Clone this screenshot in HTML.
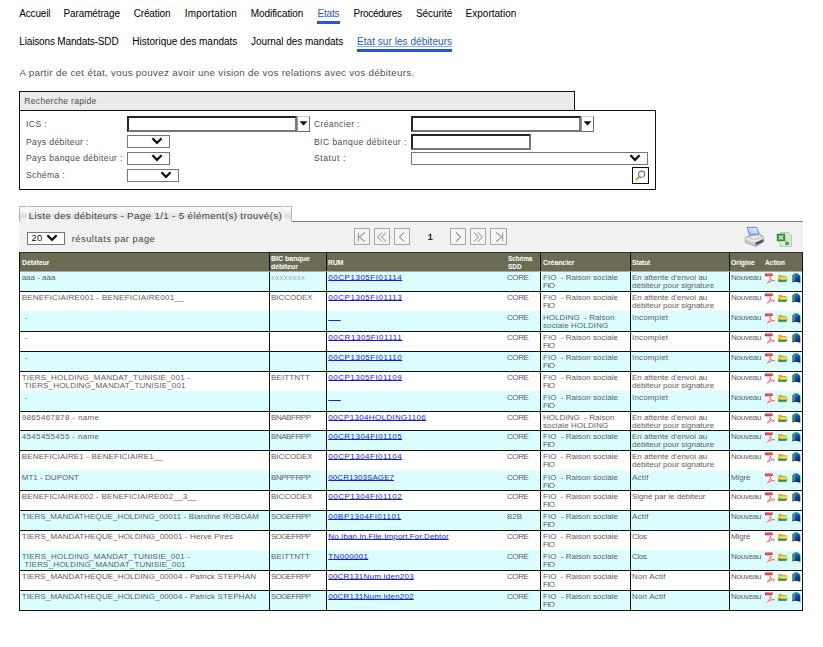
<!DOCTYPE html>
<html><head><meta charset="utf-8"><title>Etat sur les débiteurs</title>
<style>
html,body{margin:0;padding:0;background:#fff;}
body{width:823px;height:647px;position:relative;overflow:hidden;font-family:"Liberation Sans",sans-serif;}
.t{position:absolute;white-space:pre;line-height:12px;}
.nav{font-size:10.0px;font-weight:normal;color:#000;}
.navb{font-size:10.0px;font-weight:normal;color:#2458c8;}
.para{font-size:9.8px;font-weight:normal;color:#505050;}
.lbl{font-size:8.6px;font-weight:normal;color:#4c4c4c;}
.tab{font-size:9.9px;font-weight:normal;color:#444;}
.res{font-size:9.4px;font-weight:normal;color:#444;}
.pg{font-size:9.7px;font-weight:bold;color:#2a2a2a;}
.th{font-size:7.6px;font-weight:bold;color:#fff;}
.td{font-size:8.0px;font-weight:normal;color:#606060;}
.tdl{font-size:8.0px;font-weight:normal;color:#aaa;}
.lnk{font-size:8.0px;font-weight:normal;color:#1a1ae0;}
.n20{font-size:9.4px;font-weight:normal;color:#111;}
.b{position:absolute;box-sizing:border-box;}
.lnk{text-decoration:underline;text-underline-offset:0px;text-decoration-thickness:1px;}
.hl{position:absolute;height:1px;background:#111;left:20px;width:782px;}
.vl{position:absolute;width:1px;background:#111;top:252px;height:359px;}
.sel{position:absolute;box-sizing:border-box;border:1px solid #767676;background:#fff;}
.inp{position:absolute;box-sizing:border-box;background:#fff;border:2px solid;border-color:#262626 #767676 #767676 #262626;}
.dd{position:absolute;box-sizing:border-box;background:#fff;border:1px solid #6a6a6a;border-top-color:#c4d4d0;border-left-color:#999;}
.pb{position:absolute;box-sizing:border-box;width:16px;height:17px;top:228px;border:1px solid #a6a6a6;background:#f5f5f5;}
svg{position:absolute;overflow:visible;}
</style></head><body>
<div class="b" style="left:317px;top:21px;width:23px;height:3px;background:#2458c8;"></div>
<div class="b" style="left:357px;top:49px;width:95px;height:3px;background:#2458c8;"></div>
<div class="b" style="left:19px;top:110px;width:637px;height:80px;border:1px solid #111;background:#fff;"></div>
<div class="b" style="left:19px;top:91px;width:556px;height:20px;border:1px solid #111;background:#ebebeb;"></div>
<div class="inp" style="left:127px;top:116px;width:170px;height:16px;"></div>
<div class="dd" style="left:297px;top:116px;width:13px;height:16px;"></div>
<svg style="left:299px;top:121px" width="9" height="5" viewBox="0 0 9 5"><path d="M0.5 0.3H8.5L4.5 4.6Z" fill="#111"/></svg>
<div class="inp" style="left:411px;top:116px;width:170px;height:16px;"></div>
<div class="dd" style="left:581px;top:116px;width:13px;height:16px;"></div>
<svg style="left:583px;top:121px" width="9" height="5" viewBox="0 0 9 5"><path d="M0.5 0.3H8.5L4.5 4.6Z" fill="#111"/></svg>
<div class="inp" style="left:411px;top:134px;width:120px;height:16px;"></div>
<div class="sel" style="left:127px;top:135px;width:43px;height:13px;"></div>
<svg style="left:152px;top:138.3px" width="10" height="7" viewBox="0 0 10 7"><path d="M1.2 1.1L5 4.8L8.8 1.1" fill="none" stroke="#111" stroke-width="2.3" stroke-linecap="square"/></svg>
<div class="sel" style="left:127px;top:152px;width:43px;height:13px;"></div>
<svg style="left:152px;top:155.3px" width="10" height="7" viewBox="0 0 10 7"><path d="M1.2 1.1L5 4.8L8.8 1.1" fill="none" stroke="#111" stroke-width="2.3" stroke-linecap="square"/></svg>
<div class="sel" style="left:127px;top:169px;width:52px;height:13px;"></div>
<svg style="left:161px;top:172.3px" width="10" height="7" viewBox="0 0 10 7"><path d="M1.2 1.1L5 4.8L8.8 1.1" fill="none" stroke="#111" stroke-width="2.3" stroke-linecap="square"/></svg>
<div class="sel" style="left:411px;top:152px;width:237px;height:13px;"></div>
<svg style="left:629.9px;top:155.3px" width="10" height="7" viewBox="0 0 10 7"><path d="M1.2 1.1L5 4.8L8.8 1.1" fill="none" stroke="#111" stroke-width="2.3" stroke-linecap="square"/></svg>
<div class="b" style="left:632px;top:167px;width:17px;height:17px;border:1px solid #111;background:#fff;"></div>
<svg style="left:635px;top:170px" width="11" height="11" viewBox="0 0 11 11"><circle cx="6.6" cy="4.2" r="3.1" fill="#f4f6f8" stroke="#6e6e6e" stroke-width="1.1"/><path d="M4.3 6.6L1.3 9.7" stroke="#c8864a" stroke-width="1.6" stroke-linecap="round"/></svg>
<div class="b" style="left:19px;top:221px;width:784px;height:31px;background:#f0f1f0;border-top:1px solid #808080;"></div>
<div class="b" style="left:19px;top:206px;width:273px;height:16px;background:linear-gradient(#f9f9f7 0%,#f1f1f0 40%,#e1e2e2 60%,#eceded 80%,#f1f2f1 100%);border:1px solid #a9bcc2;border-bottom:none;"></div>
<div class="b" style="left:20px;top:207px;width:7px;height:15px;background:linear-gradient(#fdfdfd 0%,#efefef 40%,#d9dada 60%,#ebebeb 80%,#f4f4f4 100%);"></div>
<div class="b" style="left:27px;top:206px;width:1px;height:16px;background:#fff;"></div>
<div class="b" style="left:284px;top:207px;width:7px;height:15px;background:linear-gradient(#fdfdfd 0%,#efefef 40%,#d9dada 60%,#ebebeb 80%,#f4f4f4 100%);"></div>
<div class="b" style="left:283px;top:206px;width:1px;height:16px;background:#fff;"></div>
<div class="sel" style="left:27px;top:232px;width:38px;height:13px;"></div>
<svg style="left:47.3px;top:235.3px" width="10" height="7" viewBox="0 0 10 7"><path d="M1.2 1.1L5 4.8L8.8 1.1" fill="none" stroke="#111" stroke-width="2.3" stroke-linecap="square"/></svg>
<div class="pb" style="left:354px;"></div>
<svg style="left:354px;top:228.5px" width="16" height="16" viewBox="0 0 16 16"><path d="M4.3 3.5V12.5 M10.8 3.5L5.2 8L10.8 12.5" stroke="#9c9c9c" stroke-width="1.05" fill="none"/></svg>
<div class="pb" style="left:374px;"></div>
<svg style="left:374px;top:228.5px" width="16" height="16" viewBox="0 0 16 16"><path d="M8 3.5L3.6 8L8 12.5 M12 3.5L7.6 8L12 12.5" stroke="#9c9c9c" stroke-width="1.05" fill="none"/></svg>
<div class="pb" style="left:394px;"></div>
<svg style="left:394px;top:228.5px" width="16" height="16" viewBox="0 0 16 16"><path d="M10 3.5L5.4 8L10 12.5" stroke="#9c9c9c" stroke-width="1.05" fill="none"/></svg>
<div class="pb" style="left:450px;"></div>
<svg style="left:450px;top:228.5px" width="16" height="16" viewBox="0 0 16 16"><path d="M6 3.5L10.6 8L6 12.5" stroke="#9c9c9c" stroke-width="1.05" fill="none"/></svg>
<div class="pb" style="left:470px;"></div>
<svg style="left:470px;top:228.5px" width="16" height="16" viewBox="0 0 16 16"><path d="M4 3.5L8.4 8L4 12.5 M8 3.5L12.4 8L8 12.5" stroke="#9c9c9c" stroke-width="1.05" fill="none"/></svg>
<div class="pb" style="left:490px;width:17px;"></div>
<svg style="left:490.5px;top:228.5px" width="16" height="16" viewBox="0 0 16 16"><path d="M11.7 3.5V12.5 M5.2 3.5L10.8 8L5.2 12.5" stroke="#9c9c9c" stroke-width="1.05" fill="none"/></svg>
<svg style="left:744px;top:227px" width="21" height="20" viewBox="0 0 21 20">
<defs><linearGradient id="pp" x1="0.8" y1="0" x2="0.2" y2="1"><stop offset="0" stop-color="#eef5ff"/><stop offset="1" stop-color="#7db6f4"/></linearGradient></defs>
<path d="M3.2 0.4L12.6 0.4L15 6.8L5.8 8.6Z" fill="url(#pp)" stroke="#5a68be" stroke-width="0.8"/>
<path d="M1.2 10.8L6.4 8.2L15.8 7.2L19.6 10L19.8 14.6L12.2 19.2L1.6 15.6Z" fill="#cfd1d3" stroke="#8a8d91" stroke-width="0.8"/>
<path d="M1.4 11.2L11.6 14.6L19.4 10.6" fill="none" stroke="#f4f4f4" stroke-width="1.2"/>
<path d="M6.8 9.4L15 8.4L17 9.8L9 11.4Z" fill="#eeeff0"/>
<path d="M11.4 15.6L19.2 12.6V14.4L11.8 18.6Z" fill="#45484e"/>
<path d="M12.2 17.6L15 16.2" stroke="#5a70c8" stroke-width="0.9"/>
<circle cx="17.9" cy="12.4" r="0.7" fill="#4fbf3a"/>
</svg>
<svg style="left:776px;top:232px" width="16" height="15" viewBox="0 0 16 15">
<path d="M4 0.7H12.4L15.4 3.6V14.3H4Z" fill="#e2f2de" stroke="#98cb94" stroke-width="0.9"/>
<path d="M12.4 0.7V3.6H15.4" fill="#fff" stroke="#98cb94" stroke-width="0.7"/>
<path d="M10.4 3.4V13 M12.8 5V13" stroke="#c2e2bd" stroke-width="1"/>
<rect x="9.2" y="9.8" width="3.6" height="3.2" fill="#4a9f46"/>
<rect x="1.2" y="2.2" width="7.6" height="6.6" fill="#36a04a" stroke="#1d7a2f" stroke-width="0.8"/>
<path d="M3 3.6L7 7.4 M7 3.6L3 7.4" stroke="#f2fbf2" stroke-width="1.15"/>
</svg>
<div class="b" style="left:19px;top:252px;width:784px;height:19px;background:#6c6c55;"></div>
<div class="b" style="left:20px;top:271px;width:782px;height:20px;background:#dcfdfd;"></div>
<div class="b" style="left:20px;top:291px;width:782px;height:20px;background:#fff;"></div>
<div class="b" style="left:20px;top:311px;width:782px;height:20px;background:#dcfdfd;"></div>
<div class="b" style="left:20px;top:331px;width:782px;height:20px;background:#fff;"></div>
<div class="b" style="left:20px;top:351px;width:782px;height:20px;background:#dcfdfd;"></div>
<div class="b" style="left:20px;top:371px;width:782px;height:20px;background:#fff;"></div>
<div class="b" style="left:20px;top:391px;width:782px;height:20px;background:#dcfdfd;"></div>
<div class="b" style="left:20px;top:411px;width:782px;height:19px;background:#fff;"></div>
<div class="b" style="left:20px;top:430px;width:782px;height:20px;background:#dcfdfd;"></div>
<div class="b" style="left:20px;top:450px;width:782px;height:21px;background:#fff;"></div>
<div class="b" style="left:20px;top:471px;width:782px;height:19px;background:#dcfdfd;"></div>
<div class="b" style="left:20px;top:490px;width:782px;height:20px;background:#fff;"></div>
<div class="b" style="left:20px;top:510px;width:782px;height:20px;background:#dcfdfd;"></div>
<div class="b" style="left:20px;top:530px;width:782px;height:20px;background:#fff;"></div>
<div class="b" style="left:20px;top:550px;width:782px;height:20px;background:#dcfdfd;"></div>
<div class="b" style="left:20px;top:570px;width:782px;height:20px;background:#fff;"></div>
<div class="b" style="left:20px;top:590px;width:782px;height:20px;background:#dcfdfd;"></div>
<div class="b" style="left:20px;top:470px;width:782px;height:1px;background:#f1fefe;"></div>
<div class="b" style="left:20px;top:550px;width:782px;height:1px;background:#eafefe;"></div>
<div class="hl" style="top:291px"></div>
<div class="hl" style="top:331px"></div>
<div class="hl" style="top:351px"></div>
<div class="hl" style="top:371px"></div>
<div class="hl" style="top:411px"></div>
<div class="hl" style="top:430px"></div>
<div class="hl" style="top:450px"></div>
<div class="hl" style="top:490px"></div>
<div class="hl" style="top:510px"></div>
<div class="hl" style="top:530px"></div>
<div class="hl" style="top:570px"></div>
<div class="hl" style="top:590px"></div>
<div class="hl" style="top:610px"></div>
<div class="vl" style="left:19px"></div>
<div class="vl" style="left:269px"></div>
<div class="vl" style="left:326px"></div>
<div class="vl" style="left:540px"></div>
<div class="vl" style="left:630px"></div>
<div class="vl" style="left:729px"></div>
<div class="vl" style="left:802px"></div>
<div class="b" style="left:19px;top:252px;width:784px;height:1px;background:#2e2e28;"></div>
<div class="b" style="left:20px;top:271px;width:782px;height:1px;background:#9fada0;"></div>
<svg style="left:765px;top:273.4px" width="11" height="11" viewBox="0 0 11 11"><path d="M2 0.6H8L10.2 2.8V10.4H2Z" fill="#f6fbfb" stroke="#dfe3ea" stroke-width="0.5"/><rect x="0" y="0.4" width="7.6" height="2.8" rx="0.6" fill="#dc1c2c"/><path d="M1.3 1.8H6.4" stroke="#f7c5c9" stroke-width="0.9" stroke-dasharray="1.3 0.6"/><path d="M2.4 10C4.4 8.2 5.4 5.8 5.2 4.2C5.2 5.8 6.8 7.8 9.4 7.8C6.6 7.6 4.2 8.4 2.4 10Z" fill="none" stroke="#e6505e" stroke-width="0.85"/></svg>
<svg style="left:778px;top:275.2px" width="10" height="7" viewBox="0 0 10 7"><defs><linearGradient id="fg271" x1="0" y1="0" x2="0" y2="1"><stop offset="0" stop-color="#e8660e"/><stop offset="0.38" stop-color="#f6dc2c"/><stop offset="0.7" stop-color="#5aa428"/><stop offset="1" stop-color="#176e26"/></linearGradient></defs><path d="M0.2 1Q0.2 0.2 1 0.2H3.6L4.6 1H8Q8.6 1 8.6 1.8V2.4H9.9L8.4 6.8H0.2Z" fill="url(#fg271)"/><path d="M2.8 2.9H9L8.2 4.6H2Z" fill="#dfeee6" opacity="0.78"/></svg>
<svg style="left:792px;top:273.3px" width="9" height="10" viewBox="0 0 9 10"><defs><linearGradient id="bg271" x1="0" y1="0" x2="0.4" y2="1"><stop offset="0" stop-color="#2a97e6"/><stop offset="0.45" stop-color="#1259b0"/><stop offset="1" stop-color="#0a2f74"/></linearGradient></defs><path d="M0.3 2L2.9 0.3V8.2L0.3 9Z" fill="#3a9150"/><path d="M2.9 0.3L5.6 0.2L8.3 3V9.2L2.9 8.2Z" fill="url(#bg271)"/><path d="M0.3 9L2.9 8.2L8.3 9.2" fill="none" stroke="#14245a" stroke-width="0.9"/><path d="M1.2 2.4V8.2" stroke="#6f6a48" stroke-width="0.8"/></svg>
<svg style="left:765px;top:293.4px" width="11" height="11" viewBox="0 0 11 11"><path d="M2 0.6H8L10.2 2.8V10.4H2Z" fill="#f6fbfb" stroke="#dfe3ea" stroke-width="0.5"/><rect x="0" y="0.4" width="7.6" height="2.8" rx="0.6" fill="#dc1c2c"/><path d="M1.3 1.8H6.4" stroke="#f7c5c9" stroke-width="0.9" stroke-dasharray="1.3 0.6"/><path d="M2.4 10C4.4 8.2 5.4 5.8 5.2 4.2C5.2 5.8 6.8 7.8 9.4 7.8C6.6 7.6 4.2 8.4 2.4 10Z" fill="none" stroke="#e6505e" stroke-width="0.85"/></svg>
<svg style="left:778px;top:295.2px" width="10" height="7" viewBox="0 0 10 7"><defs><linearGradient id="fg291" x1="0" y1="0" x2="0" y2="1"><stop offset="0" stop-color="#e8660e"/><stop offset="0.38" stop-color="#f6dc2c"/><stop offset="0.7" stop-color="#5aa428"/><stop offset="1" stop-color="#176e26"/></linearGradient></defs><path d="M0.2 1Q0.2 0.2 1 0.2H3.6L4.6 1H8Q8.6 1 8.6 1.8V2.4H9.9L8.4 6.8H0.2Z" fill="url(#fg291)"/><path d="M2.8 2.9H9L8.2 4.6H2Z" fill="#dfeee6" opacity="0.78"/></svg>
<svg style="left:792px;top:293.3px" width="9" height="10" viewBox="0 0 9 10"><defs><linearGradient id="bg291" x1="0" y1="0" x2="0.4" y2="1"><stop offset="0" stop-color="#2a97e6"/><stop offset="0.45" stop-color="#1259b0"/><stop offset="1" stop-color="#0a2f74"/></linearGradient></defs><path d="M0.3 2L2.9 0.3V8.2L0.3 9Z" fill="#3a9150"/><path d="M2.9 0.3L5.6 0.2L8.3 3V9.2L2.9 8.2Z" fill="url(#bg291)"/><path d="M0.3 9L2.9 8.2L8.3 9.2" fill="none" stroke="#14245a" stroke-width="0.9"/><path d="M1.2 2.4V8.2" stroke="#6f6a48" stroke-width="0.8"/></svg>
<svg style="left:765px;top:313.4px" width="11" height="11" viewBox="0 0 11 11"><path d="M2 0.6H8L10.2 2.8V10.4H2Z" fill="#f6fbfb" stroke="#dfe3ea" stroke-width="0.5"/><rect x="0" y="0.4" width="7.6" height="2.8" rx="0.6" fill="#dc1c2c"/><path d="M1.3 1.8H6.4" stroke="#f7c5c9" stroke-width="0.9" stroke-dasharray="1.3 0.6"/><path d="M2.4 10C4.4 8.2 5.4 5.8 5.2 4.2C5.2 5.8 6.8 7.8 9.4 7.8C6.6 7.6 4.2 8.4 2.4 10Z" fill="none" stroke="#e6505e" stroke-width="0.85"/></svg>
<svg style="left:778px;top:315.2px" width="10" height="7" viewBox="0 0 10 7"><defs><linearGradient id="fg311" x1="0" y1="0" x2="0" y2="1"><stop offset="0" stop-color="#e8660e"/><stop offset="0.38" stop-color="#f6dc2c"/><stop offset="0.7" stop-color="#5aa428"/><stop offset="1" stop-color="#176e26"/></linearGradient></defs><path d="M0.2 1Q0.2 0.2 1 0.2H3.6L4.6 1H8Q8.6 1 8.6 1.8V2.4H9.9L8.4 6.8H0.2Z" fill="url(#fg311)"/><path d="M2.8 2.9H9L8.2 4.6H2Z" fill="#dfeee6" opacity="0.78"/></svg>
<svg style="left:792px;top:313.3px" width="9" height="10" viewBox="0 0 9 10"><defs><linearGradient id="bg311" x1="0" y1="0" x2="0.4" y2="1"><stop offset="0" stop-color="#2a97e6"/><stop offset="0.45" stop-color="#1259b0"/><stop offset="1" stop-color="#0a2f74"/></linearGradient></defs><path d="M0.3 2L2.9 0.3V8.2L0.3 9Z" fill="#3a9150"/><path d="M2.9 0.3L5.6 0.2L8.3 3V9.2L2.9 8.2Z" fill="url(#bg311)"/><path d="M0.3 9L2.9 8.2L8.3 9.2" fill="none" stroke="#14245a" stroke-width="0.9"/><path d="M1.2 2.4V8.2" stroke="#6f6a48" stroke-width="0.8"/></svg>
<svg style="left:765px;top:333.4px" width="11" height="11" viewBox="0 0 11 11"><path d="M2 0.6H8L10.2 2.8V10.4H2Z" fill="#f6fbfb" stroke="#dfe3ea" stroke-width="0.5"/><rect x="0" y="0.4" width="7.6" height="2.8" rx="0.6" fill="#dc1c2c"/><path d="M1.3 1.8H6.4" stroke="#f7c5c9" stroke-width="0.9" stroke-dasharray="1.3 0.6"/><path d="M2.4 10C4.4 8.2 5.4 5.8 5.2 4.2C5.2 5.8 6.8 7.8 9.4 7.8C6.6 7.6 4.2 8.4 2.4 10Z" fill="none" stroke="#e6505e" stroke-width="0.85"/></svg>
<svg style="left:778px;top:335.2px" width="10" height="7" viewBox="0 0 10 7"><defs><linearGradient id="fg331" x1="0" y1="0" x2="0" y2="1"><stop offset="0" stop-color="#e8660e"/><stop offset="0.38" stop-color="#f6dc2c"/><stop offset="0.7" stop-color="#5aa428"/><stop offset="1" stop-color="#176e26"/></linearGradient></defs><path d="M0.2 1Q0.2 0.2 1 0.2H3.6L4.6 1H8Q8.6 1 8.6 1.8V2.4H9.9L8.4 6.8H0.2Z" fill="url(#fg331)"/><path d="M2.8 2.9H9L8.2 4.6H2Z" fill="#dfeee6" opacity="0.78"/></svg>
<svg style="left:792px;top:333.3px" width="9" height="10" viewBox="0 0 9 10"><defs><linearGradient id="bg331" x1="0" y1="0" x2="0.4" y2="1"><stop offset="0" stop-color="#2a97e6"/><stop offset="0.45" stop-color="#1259b0"/><stop offset="1" stop-color="#0a2f74"/></linearGradient></defs><path d="M0.3 2L2.9 0.3V8.2L0.3 9Z" fill="#3a9150"/><path d="M2.9 0.3L5.6 0.2L8.3 3V9.2L2.9 8.2Z" fill="url(#bg331)"/><path d="M0.3 9L2.9 8.2L8.3 9.2" fill="none" stroke="#14245a" stroke-width="0.9"/><path d="M1.2 2.4V8.2" stroke="#6f6a48" stroke-width="0.8"/></svg>
<svg style="left:765px;top:353.4px" width="11" height="11" viewBox="0 0 11 11"><path d="M2 0.6H8L10.2 2.8V10.4H2Z" fill="#f6fbfb" stroke="#dfe3ea" stroke-width="0.5"/><rect x="0" y="0.4" width="7.6" height="2.8" rx="0.6" fill="#dc1c2c"/><path d="M1.3 1.8H6.4" stroke="#f7c5c9" stroke-width="0.9" stroke-dasharray="1.3 0.6"/><path d="M2.4 10C4.4 8.2 5.4 5.8 5.2 4.2C5.2 5.8 6.8 7.8 9.4 7.8C6.6 7.6 4.2 8.4 2.4 10Z" fill="none" stroke="#e6505e" stroke-width="0.85"/></svg>
<svg style="left:778px;top:355.2px" width="10" height="7" viewBox="0 0 10 7"><defs><linearGradient id="fg351" x1="0" y1="0" x2="0" y2="1"><stop offset="0" stop-color="#e8660e"/><stop offset="0.38" stop-color="#f6dc2c"/><stop offset="0.7" stop-color="#5aa428"/><stop offset="1" stop-color="#176e26"/></linearGradient></defs><path d="M0.2 1Q0.2 0.2 1 0.2H3.6L4.6 1H8Q8.6 1 8.6 1.8V2.4H9.9L8.4 6.8H0.2Z" fill="url(#fg351)"/><path d="M2.8 2.9H9L8.2 4.6H2Z" fill="#dfeee6" opacity="0.78"/></svg>
<svg style="left:792px;top:353.3px" width="9" height="10" viewBox="0 0 9 10"><defs><linearGradient id="bg351" x1="0" y1="0" x2="0.4" y2="1"><stop offset="0" stop-color="#2a97e6"/><stop offset="0.45" stop-color="#1259b0"/><stop offset="1" stop-color="#0a2f74"/></linearGradient></defs><path d="M0.3 2L2.9 0.3V8.2L0.3 9Z" fill="#3a9150"/><path d="M2.9 0.3L5.6 0.2L8.3 3V9.2L2.9 8.2Z" fill="url(#bg351)"/><path d="M0.3 9L2.9 8.2L8.3 9.2" fill="none" stroke="#14245a" stroke-width="0.9"/><path d="M1.2 2.4V8.2" stroke="#6f6a48" stroke-width="0.8"/></svg>
<svg style="left:765px;top:373.4px" width="11" height="11" viewBox="0 0 11 11"><path d="M2 0.6H8L10.2 2.8V10.4H2Z" fill="#f6fbfb" stroke="#dfe3ea" stroke-width="0.5"/><rect x="0" y="0.4" width="7.6" height="2.8" rx="0.6" fill="#dc1c2c"/><path d="M1.3 1.8H6.4" stroke="#f7c5c9" stroke-width="0.9" stroke-dasharray="1.3 0.6"/><path d="M2.4 10C4.4 8.2 5.4 5.8 5.2 4.2C5.2 5.8 6.8 7.8 9.4 7.8C6.6 7.6 4.2 8.4 2.4 10Z" fill="none" stroke="#e6505e" stroke-width="0.85"/></svg>
<svg style="left:778px;top:375.2px" width="10" height="7" viewBox="0 0 10 7"><defs><linearGradient id="fg371" x1="0" y1="0" x2="0" y2="1"><stop offset="0" stop-color="#e8660e"/><stop offset="0.38" stop-color="#f6dc2c"/><stop offset="0.7" stop-color="#5aa428"/><stop offset="1" stop-color="#176e26"/></linearGradient></defs><path d="M0.2 1Q0.2 0.2 1 0.2H3.6L4.6 1H8Q8.6 1 8.6 1.8V2.4H9.9L8.4 6.8H0.2Z" fill="url(#fg371)"/><path d="M2.8 2.9H9L8.2 4.6H2Z" fill="#dfeee6" opacity="0.78"/></svg>
<svg style="left:792px;top:373.3px" width="9" height="10" viewBox="0 0 9 10"><defs><linearGradient id="bg371" x1="0" y1="0" x2="0.4" y2="1"><stop offset="0" stop-color="#2a97e6"/><stop offset="0.45" stop-color="#1259b0"/><stop offset="1" stop-color="#0a2f74"/></linearGradient></defs><path d="M0.3 2L2.9 0.3V8.2L0.3 9Z" fill="#3a9150"/><path d="M2.9 0.3L5.6 0.2L8.3 3V9.2L2.9 8.2Z" fill="url(#bg371)"/><path d="M0.3 9L2.9 8.2L8.3 9.2" fill="none" stroke="#14245a" stroke-width="0.9"/><path d="M1.2 2.4V8.2" stroke="#6f6a48" stroke-width="0.8"/></svg>
<svg style="left:765px;top:393.4px" width="11" height="11" viewBox="0 0 11 11"><path d="M2 0.6H8L10.2 2.8V10.4H2Z" fill="#f6fbfb" stroke="#dfe3ea" stroke-width="0.5"/><rect x="0" y="0.4" width="7.6" height="2.8" rx="0.6" fill="#dc1c2c"/><path d="M1.3 1.8H6.4" stroke="#f7c5c9" stroke-width="0.9" stroke-dasharray="1.3 0.6"/><path d="M2.4 10C4.4 8.2 5.4 5.8 5.2 4.2C5.2 5.8 6.8 7.8 9.4 7.8C6.6 7.6 4.2 8.4 2.4 10Z" fill="none" stroke="#e6505e" stroke-width="0.85"/></svg>
<svg style="left:778px;top:395.2px" width="10" height="7" viewBox="0 0 10 7"><defs><linearGradient id="fg391" x1="0" y1="0" x2="0" y2="1"><stop offset="0" stop-color="#e8660e"/><stop offset="0.38" stop-color="#f6dc2c"/><stop offset="0.7" stop-color="#5aa428"/><stop offset="1" stop-color="#176e26"/></linearGradient></defs><path d="M0.2 1Q0.2 0.2 1 0.2H3.6L4.6 1H8Q8.6 1 8.6 1.8V2.4H9.9L8.4 6.8H0.2Z" fill="url(#fg391)"/><path d="M2.8 2.9H9L8.2 4.6H2Z" fill="#dfeee6" opacity="0.78"/></svg>
<svg style="left:792px;top:393.3px" width="9" height="10" viewBox="0 0 9 10"><defs><linearGradient id="bg391" x1="0" y1="0" x2="0.4" y2="1"><stop offset="0" stop-color="#2a97e6"/><stop offset="0.45" stop-color="#1259b0"/><stop offset="1" stop-color="#0a2f74"/></linearGradient></defs><path d="M0.3 2L2.9 0.3V8.2L0.3 9Z" fill="#3a9150"/><path d="M2.9 0.3L5.6 0.2L8.3 3V9.2L2.9 8.2Z" fill="url(#bg391)"/><path d="M0.3 9L2.9 8.2L8.3 9.2" fill="none" stroke="#14245a" stroke-width="0.9"/><path d="M1.2 2.4V8.2" stroke="#6f6a48" stroke-width="0.8"/></svg>
<svg style="left:765px;top:413.4px" width="11" height="11" viewBox="0 0 11 11"><path d="M2 0.6H8L10.2 2.8V10.4H2Z" fill="#f6fbfb" stroke="#dfe3ea" stroke-width="0.5"/><rect x="0" y="0.4" width="7.6" height="2.8" rx="0.6" fill="#dc1c2c"/><path d="M1.3 1.8H6.4" stroke="#f7c5c9" stroke-width="0.9" stroke-dasharray="1.3 0.6"/><path d="M2.4 10C4.4 8.2 5.4 5.8 5.2 4.2C5.2 5.8 6.8 7.8 9.4 7.8C6.6 7.6 4.2 8.4 2.4 10Z" fill="none" stroke="#e6505e" stroke-width="0.85"/></svg>
<svg style="left:778px;top:415.2px" width="10" height="7" viewBox="0 0 10 7"><defs><linearGradient id="fg411" x1="0" y1="0" x2="0" y2="1"><stop offset="0" stop-color="#e8660e"/><stop offset="0.38" stop-color="#f6dc2c"/><stop offset="0.7" stop-color="#5aa428"/><stop offset="1" stop-color="#176e26"/></linearGradient></defs><path d="M0.2 1Q0.2 0.2 1 0.2H3.6L4.6 1H8Q8.6 1 8.6 1.8V2.4H9.9L8.4 6.8H0.2Z" fill="url(#fg411)"/><path d="M2.8 2.9H9L8.2 4.6H2Z" fill="#dfeee6" opacity="0.78"/></svg>
<svg style="left:792px;top:413.3px" width="9" height="10" viewBox="0 0 9 10"><defs><linearGradient id="bg411" x1="0" y1="0" x2="0.4" y2="1"><stop offset="0" stop-color="#2a97e6"/><stop offset="0.45" stop-color="#1259b0"/><stop offset="1" stop-color="#0a2f74"/></linearGradient></defs><path d="M0.3 2L2.9 0.3V8.2L0.3 9Z" fill="#3a9150"/><path d="M2.9 0.3L5.6 0.2L8.3 3V9.2L2.9 8.2Z" fill="url(#bg411)"/><path d="M0.3 9L2.9 8.2L8.3 9.2" fill="none" stroke="#14245a" stroke-width="0.9"/><path d="M1.2 2.4V8.2" stroke="#6f6a48" stroke-width="0.8"/></svg>
<svg style="left:765px;top:432.4px" width="11" height="11" viewBox="0 0 11 11"><path d="M2 0.6H8L10.2 2.8V10.4H2Z" fill="#f6fbfb" stroke="#dfe3ea" stroke-width="0.5"/><rect x="0" y="0.4" width="7.6" height="2.8" rx="0.6" fill="#dc1c2c"/><path d="M1.3 1.8H6.4" stroke="#f7c5c9" stroke-width="0.9" stroke-dasharray="1.3 0.6"/><path d="M2.4 10C4.4 8.2 5.4 5.8 5.2 4.2C5.2 5.8 6.8 7.8 9.4 7.8C6.6 7.6 4.2 8.4 2.4 10Z" fill="none" stroke="#e6505e" stroke-width="0.85"/></svg>
<svg style="left:778px;top:434.2px" width="10" height="7" viewBox="0 0 10 7"><defs><linearGradient id="fg430" x1="0" y1="0" x2="0" y2="1"><stop offset="0" stop-color="#e8660e"/><stop offset="0.38" stop-color="#f6dc2c"/><stop offset="0.7" stop-color="#5aa428"/><stop offset="1" stop-color="#176e26"/></linearGradient></defs><path d="M0.2 1Q0.2 0.2 1 0.2H3.6L4.6 1H8Q8.6 1 8.6 1.8V2.4H9.9L8.4 6.8H0.2Z" fill="url(#fg430)"/><path d="M2.8 2.9H9L8.2 4.6H2Z" fill="#dfeee6" opacity="0.78"/></svg>
<svg style="left:792px;top:432.3px" width="9" height="10" viewBox="0 0 9 10"><defs><linearGradient id="bg430" x1="0" y1="0" x2="0.4" y2="1"><stop offset="0" stop-color="#2a97e6"/><stop offset="0.45" stop-color="#1259b0"/><stop offset="1" stop-color="#0a2f74"/></linearGradient></defs><path d="M0.3 2L2.9 0.3V8.2L0.3 9Z" fill="#3a9150"/><path d="M2.9 0.3L5.6 0.2L8.3 3V9.2L2.9 8.2Z" fill="url(#bg430)"/><path d="M0.3 9L2.9 8.2L8.3 9.2" fill="none" stroke="#14245a" stroke-width="0.9"/><path d="M1.2 2.4V8.2" stroke="#6f6a48" stroke-width="0.8"/></svg>
<svg style="left:765px;top:452.4px" width="11" height="11" viewBox="0 0 11 11"><path d="M2 0.6H8L10.2 2.8V10.4H2Z" fill="#f6fbfb" stroke="#dfe3ea" stroke-width="0.5"/><rect x="0" y="0.4" width="7.6" height="2.8" rx="0.6" fill="#dc1c2c"/><path d="M1.3 1.8H6.4" stroke="#f7c5c9" stroke-width="0.9" stroke-dasharray="1.3 0.6"/><path d="M2.4 10C4.4 8.2 5.4 5.8 5.2 4.2C5.2 5.8 6.8 7.8 9.4 7.8C6.6 7.6 4.2 8.4 2.4 10Z" fill="none" stroke="#e6505e" stroke-width="0.85"/></svg>
<svg style="left:778px;top:454.2px" width="10" height="7" viewBox="0 0 10 7"><defs><linearGradient id="fg450" x1="0" y1="0" x2="0" y2="1"><stop offset="0" stop-color="#e8660e"/><stop offset="0.38" stop-color="#f6dc2c"/><stop offset="0.7" stop-color="#5aa428"/><stop offset="1" stop-color="#176e26"/></linearGradient></defs><path d="M0.2 1Q0.2 0.2 1 0.2H3.6L4.6 1H8Q8.6 1 8.6 1.8V2.4H9.9L8.4 6.8H0.2Z" fill="url(#fg450)"/><path d="M2.8 2.9H9L8.2 4.6H2Z" fill="#dfeee6" opacity="0.78"/></svg>
<svg style="left:792px;top:452.3px" width="9" height="10" viewBox="0 0 9 10"><defs><linearGradient id="bg450" x1="0" y1="0" x2="0.4" y2="1"><stop offset="0" stop-color="#2a97e6"/><stop offset="0.45" stop-color="#1259b0"/><stop offset="1" stop-color="#0a2f74"/></linearGradient></defs><path d="M0.3 2L2.9 0.3V8.2L0.3 9Z" fill="#3a9150"/><path d="M2.9 0.3L5.6 0.2L8.3 3V9.2L2.9 8.2Z" fill="url(#bg450)"/><path d="M0.3 9L2.9 8.2L8.3 9.2" fill="none" stroke="#14245a" stroke-width="0.9"/><path d="M1.2 2.4V8.2" stroke="#6f6a48" stroke-width="0.8"/></svg>
<svg style="left:765px;top:473.4px" width="11" height="11" viewBox="0 0 11 11"><path d="M2 0.6H8L10.2 2.8V10.4H2Z" fill="#f6fbfb" stroke="#dfe3ea" stroke-width="0.5"/><rect x="0" y="0.4" width="7.6" height="2.8" rx="0.6" fill="#dc1c2c"/><path d="M1.3 1.8H6.4" stroke="#f7c5c9" stroke-width="0.9" stroke-dasharray="1.3 0.6"/><path d="M2.4 10C4.4 8.2 5.4 5.8 5.2 4.2C5.2 5.8 6.8 7.8 9.4 7.8C6.6 7.6 4.2 8.4 2.4 10Z" fill="none" stroke="#e6505e" stroke-width="0.85"/></svg>
<svg style="left:778px;top:475.2px" width="10" height="7" viewBox="0 0 10 7"><defs><linearGradient id="fg471" x1="0" y1="0" x2="0" y2="1"><stop offset="0" stop-color="#e8660e"/><stop offset="0.38" stop-color="#f6dc2c"/><stop offset="0.7" stop-color="#5aa428"/><stop offset="1" stop-color="#176e26"/></linearGradient></defs><path d="M0.2 1Q0.2 0.2 1 0.2H3.6L4.6 1H8Q8.6 1 8.6 1.8V2.4H9.9L8.4 6.8H0.2Z" fill="url(#fg471)"/><path d="M2.8 2.9H9L8.2 4.6H2Z" fill="#dfeee6" opacity="0.78"/></svg>
<svg style="left:792px;top:473.3px" width="9" height="10" viewBox="0 0 9 10"><defs><linearGradient id="bg471" x1="0" y1="0" x2="0.4" y2="1"><stop offset="0" stop-color="#2a97e6"/><stop offset="0.45" stop-color="#1259b0"/><stop offset="1" stop-color="#0a2f74"/></linearGradient></defs><path d="M0.3 2L2.9 0.3V8.2L0.3 9Z" fill="#3a9150"/><path d="M2.9 0.3L5.6 0.2L8.3 3V9.2L2.9 8.2Z" fill="url(#bg471)"/><path d="M0.3 9L2.9 8.2L8.3 9.2" fill="none" stroke="#14245a" stroke-width="0.9"/><path d="M1.2 2.4V8.2" stroke="#6f6a48" stroke-width="0.8"/></svg>
<svg style="left:765px;top:492.4px" width="11" height="11" viewBox="0 0 11 11"><path d="M2 0.6H8L10.2 2.8V10.4H2Z" fill="#f6fbfb" stroke="#dfe3ea" stroke-width="0.5"/><rect x="0" y="0.4" width="7.6" height="2.8" rx="0.6" fill="#dc1c2c"/><path d="M1.3 1.8H6.4" stroke="#f7c5c9" stroke-width="0.9" stroke-dasharray="1.3 0.6"/><path d="M2.4 10C4.4 8.2 5.4 5.8 5.2 4.2C5.2 5.8 6.8 7.8 9.4 7.8C6.6 7.6 4.2 8.4 2.4 10Z" fill="none" stroke="#e6505e" stroke-width="0.85"/></svg>
<svg style="left:778px;top:494.2px" width="10" height="7" viewBox="0 0 10 7"><defs><linearGradient id="fg490" x1="0" y1="0" x2="0" y2="1"><stop offset="0" stop-color="#e8660e"/><stop offset="0.38" stop-color="#f6dc2c"/><stop offset="0.7" stop-color="#5aa428"/><stop offset="1" stop-color="#176e26"/></linearGradient></defs><path d="M0.2 1Q0.2 0.2 1 0.2H3.6L4.6 1H8Q8.6 1 8.6 1.8V2.4H9.9L8.4 6.8H0.2Z" fill="url(#fg490)"/><path d="M2.8 2.9H9L8.2 4.6H2Z" fill="#dfeee6" opacity="0.78"/></svg>
<svg style="left:792px;top:492.3px" width="9" height="10" viewBox="0 0 9 10"><defs><linearGradient id="bg490" x1="0" y1="0" x2="0.4" y2="1"><stop offset="0" stop-color="#2a97e6"/><stop offset="0.45" stop-color="#1259b0"/><stop offset="1" stop-color="#0a2f74"/></linearGradient></defs><path d="M0.3 2L2.9 0.3V8.2L0.3 9Z" fill="#3a9150"/><path d="M2.9 0.3L5.6 0.2L8.3 3V9.2L2.9 8.2Z" fill="url(#bg490)"/><path d="M0.3 9L2.9 8.2L8.3 9.2" fill="none" stroke="#14245a" stroke-width="0.9"/><path d="M1.2 2.4V8.2" stroke="#6f6a48" stroke-width="0.8"/></svg>
<svg style="left:765px;top:512.4px" width="11" height="11" viewBox="0 0 11 11"><path d="M2 0.6H8L10.2 2.8V10.4H2Z" fill="#f6fbfb" stroke="#dfe3ea" stroke-width="0.5"/><rect x="0" y="0.4" width="7.6" height="2.8" rx="0.6" fill="#dc1c2c"/><path d="M1.3 1.8H6.4" stroke="#f7c5c9" stroke-width="0.9" stroke-dasharray="1.3 0.6"/><path d="M2.4 10C4.4 8.2 5.4 5.8 5.2 4.2C5.2 5.8 6.8 7.8 9.4 7.8C6.6 7.6 4.2 8.4 2.4 10Z" fill="none" stroke="#e6505e" stroke-width="0.85"/></svg>
<svg style="left:778px;top:514.2px" width="10" height="7" viewBox="0 0 10 7"><defs><linearGradient id="fg510" x1="0" y1="0" x2="0" y2="1"><stop offset="0" stop-color="#e8660e"/><stop offset="0.38" stop-color="#f6dc2c"/><stop offset="0.7" stop-color="#5aa428"/><stop offset="1" stop-color="#176e26"/></linearGradient></defs><path d="M0.2 1Q0.2 0.2 1 0.2H3.6L4.6 1H8Q8.6 1 8.6 1.8V2.4H9.9L8.4 6.8H0.2Z" fill="url(#fg510)"/><path d="M2.8 2.9H9L8.2 4.6H2Z" fill="#dfeee6" opacity="0.78"/></svg>
<svg style="left:792px;top:512.3px" width="9" height="10" viewBox="0 0 9 10"><defs><linearGradient id="bg510" x1="0" y1="0" x2="0.4" y2="1"><stop offset="0" stop-color="#2a97e6"/><stop offset="0.45" stop-color="#1259b0"/><stop offset="1" stop-color="#0a2f74"/></linearGradient></defs><path d="M0.3 2L2.9 0.3V8.2L0.3 9Z" fill="#3a9150"/><path d="M2.9 0.3L5.6 0.2L8.3 3V9.2L2.9 8.2Z" fill="url(#bg510)"/><path d="M0.3 9L2.9 8.2L8.3 9.2" fill="none" stroke="#14245a" stroke-width="0.9"/><path d="M1.2 2.4V8.2" stroke="#6f6a48" stroke-width="0.8"/></svg>
<svg style="left:765px;top:532.4px" width="11" height="11" viewBox="0 0 11 11"><path d="M2 0.6H8L10.2 2.8V10.4H2Z" fill="#f6fbfb" stroke="#dfe3ea" stroke-width="0.5"/><rect x="0" y="0.4" width="7.6" height="2.8" rx="0.6" fill="#dc1c2c"/><path d="M1.3 1.8H6.4" stroke="#f7c5c9" stroke-width="0.9" stroke-dasharray="1.3 0.6"/><path d="M2.4 10C4.4 8.2 5.4 5.8 5.2 4.2C5.2 5.8 6.8 7.8 9.4 7.8C6.6 7.6 4.2 8.4 2.4 10Z" fill="none" stroke="#e6505e" stroke-width="0.85"/></svg>
<svg style="left:778px;top:534.2px" width="10" height="7" viewBox="0 0 10 7"><defs><linearGradient id="fg530" x1="0" y1="0" x2="0" y2="1"><stop offset="0" stop-color="#e8660e"/><stop offset="0.38" stop-color="#f6dc2c"/><stop offset="0.7" stop-color="#5aa428"/><stop offset="1" stop-color="#176e26"/></linearGradient></defs><path d="M0.2 1Q0.2 0.2 1 0.2H3.6L4.6 1H8Q8.6 1 8.6 1.8V2.4H9.9L8.4 6.8H0.2Z" fill="url(#fg530)"/><path d="M2.8 2.9H9L8.2 4.6H2Z" fill="#dfeee6" opacity="0.78"/></svg>
<svg style="left:792px;top:532.3px" width="9" height="10" viewBox="0 0 9 10"><defs><linearGradient id="bg530" x1="0" y1="0" x2="0.4" y2="1"><stop offset="0" stop-color="#2a97e6"/><stop offset="0.45" stop-color="#1259b0"/><stop offset="1" stop-color="#0a2f74"/></linearGradient></defs><path d="M0.3 2L2.9 0.3V8.2L0.3 9Z" fill="#3a9150"/><path d="M2.9 0.3L5.6 0.2L8.3 3V9.2L2.9 8.2Z" fill="url(#bg530)"/><path d="M0.3 9L2.9 8.2L8.3 9.2" fill="none" stroke="#14245a" stroke-width="0.9"/><path d="M1.2 2.4V8.2" stroke="#6f6a48" stroke-width="0.8"/></svg>
<svg style="left:765px;top:552.4px" width="11" height="11" viewBox="0 0 11 11"><path d="M2 0.6H8L10.2 2.8V10.4H2Z" fill="#f6fbfb" stroke="#dfe3ea" stroke-width="0.5"/><rect x="0" y="0.4" width="7.6" height="2.8" rx="0.6" fill="#dc1c2c"/><path d="M1.3 1.8H6.4" stroke="#f7c5c9" stroke-width="0.9" stroke-dasharray="1.3 0.6"/><path d="M2.4 10C4.4 8.2 5.4 5.8 5.2 4.2C5.2 5.8 6.8 7.8 9.4 7.8C6.6 7.6 4.2 8.4 2.4 10Z" fill="none" stroke="#e6505e" stroke-width="0.85"/></svg>
<svg style="left:778px;top:554.2px" width="10" height="7" viewBox="0 0 10 7"><defs><linearGradient id="fg550" x1="0" y1="0" x2="0" y2="1"><stop offset="0" stop-color="#e8660e"/><stop offset="0.38" stop-color="#f6dc2c"/><stop offset="0.7" stop-color="#5aa428"/><stop offset="1" stop-color="#176e26"/></linearGradient></defs><path d="M0.2 1Q0.2 0.2 1 0.2H3.6L4.6 1H8Q8.6 1 8.6 1.8V2.4H9.9L8.4 6.8H0.2Z" fill="url(#fg550)"/><path d="M2.8 2.9H9L8.2 4.6H2Z" fill="#dfeee6" opacity="0.78"/></svg>
<svg style="left:792px;top:552.3px" width="9" height="10" viewBox="0 0 9 10"><defs><linearGradient id="bg550" x1="0" y1="0" x2="0.4" y2="1"><stop offset="0" stop-color="#2a97e6"/><stop offset="0.45" stop-color="#1259b0"/><stop offset="1" stop-color="#0a2f74"/></linearGradient></defs><path d="M0.3 2L2.9 0.3V8.2L0.3 9Z" fill="#3a9150"/><path d="M2.9 0.3L5.6 0.2L8.3 3V9.2L2.9 8.2Z" fill="url(#bg550)"/><path d="M0.3 9L2.9 8.2L8.3 9.2" fill="none" stroke="#14245a" stroke-width="0.9"/><path d="M1.2 2.4V8.2" stroke="#6f6a48" stroke-width="0.8"/></svg>
<svg style="left:765px;top:572.4px" width="11" height="11" viewBox="0 0 11 11"><path d="M2 0.6H8L10.2 2.8V10.4H2Z" fill="#f6fbfb" stroke="#dfe3ea" stroke-width="0.5"/><rect x="0" y="0.4" width="7.6" height="2.8" rx="0.6" fill="#dc1c2c"/><path d="M1.3 1.8H6.4" stroke="#f7c5c9" stroke-width="0.9" stroke-dasharray="1.3 0.6"/><path d="M2.4 10C4.4 8.2 5.4 5.8 5.2 4.2C5.2 5.8 6.8 7.8 9.4 7.8C6.6 7.6 4.2 8.4 2.4 10Z" fill="none" stroke="#e6505e" stroke-width="0.85"/></svg>
<svg style="left:778px;top:574.2px" width="10" height="7" viewBox="0 0 10 7"><defs><linearGradient id="fg570" x1="0" y1="0" x2="0" y2="1"><stop offset="0" stop-color="#e8660e"/><stop offset="0.38" stop-color="#f6dc2c"/><stop offset="0.7" stop-color="#5aa428"/><stop offset="1" stop-color="#176e26"/></linearGradient></defs><path d="M0.2 1Q0.2 0.2 1 0.2H3.6L4.6 1H8Q8.6 1 8.6 1.8V2.4H9.9L8.4 6.8H0.2Z" fill="url(#fg570)"/><path d="M2.8 2.9H9L8.2 4.6H2Z" fill="#dfeee6" opacity="0.78"/></svg>
<svg style="left:792px;top:572.3px" width="9" height="10" viewBox="0 0 9 10"><defs><linearGradient id="bg570" x1="0" y1="0" x2="0.4" y2="1"><stop offset="0" stop-color="#2a97e6"/><stop offset="0.45" stop-color="#1259b0"/><stop offset="1" stop-color="#0a2f74"/></linearGradient></defs><path d="M0.3 2L2.9 0.3V8.2L0.3 9Z" fill="#3a9150"/><path d="M2.9 0.3L5.6 0.2L8.3 3V9.2L2.9 8.2Z" fill="url(#bg570)"/><path d="M0.3 9L2.9 8.2L8.3 9.2" fill="none" stroke="#14245a" stroke-width="0.9"/><path d="M1.2 2.4V8.2" stroke="#6f6a48" stroke-width="0.8"/></svg>
<svg style="left:765px;top:592.4px" width="11" height="11" viewBox="0 0 11 11"><path d="M2 0.6H8L10.2 2.8V10.4H2Z" fill="#f6fbfb" stroke="#dfe3ea" stroke-width="0.5"/><rect x="0" y="0.4" width="7.6" height="2.8" rx="0.6" fill="#dc1c2c"/><path d="M1.3 1.8H6.4" stroke="#f7c5c9" stroke-width="0.9" stroke-dasharray="1.3 0.6"/><path d="M2.4 10C4.4 8.2 5.4 5.8 5.2 4.2C5.2 5.8 6.8 7.8 9.4 7.8C6.6 7.6 4.2 8.4 2.4 10Z" fill="none" stroke="#e6505e" stroke-width="0.85"/></svg>
<svg style="left:778px;top:594.2px" width="10" height="7" viewBox="0 0 10 7"><defs><linearGradient id="fg590" x1="0" y1="0" x2="0" y2="1"><stop offset="0" stop-color="#e8660e"/><stop offset="0.38" stop-color="#f6dc2c"/><stop offset="0.7" stop-color="#5aa428"/><stop offset="1" stop-color="#176e26"/></linearGradient></defs><path d="M0.2 1Q0.2 0.2 1 0.2H3.6L4.6 1H8Q8.6 1 8.6 1.8V2.4H9.9L8.4 6.8H0.2Z" fill="url(#fg590)"/><path d="M2.8 2.9H9L8.2 4.6H2Z" fill="#dfeee6" opacity="0.78"/></svg>
<svg style="left:792px;top:592.3px" width="9" height="10" viewBox="0 0 9 10"><defs><linearGradient id="bg590" x1="0" y1="0" x2="0.4" y2="1"><stop offset="0" stop-color="#2a97e6"/><stop offset="0.45" stop-color="#1259b0"/><stop offset="1" stop-color="#0a2f74"/></linearGradient></defs><path d="M0.3 2L2.9 0.3V8.2L0.3 9Z" fill="#3a9150"/><path d="M2.9 0.3L5.6 0.2L8.3 3V9.2L2.9 8.2Z" fill="url(#bg590)"/><path d="M0.3 9L2.9 8.2L8.3 9.2" fill="none" stroke="#14245a" stroke-width="0.9"/><path d="M1.2 2.4V8.2" stroke="#6f6a48" stroke-width="0.8"/></svg>
<span class="t nav" style="left:19.30px;top:8.00px;letter-spacing:-0.192px;">Accueil</span>
<span class="t nav" style="left:63.60px;top:8.00px;letter-spacing:-0.141px;">Paramétrage</span>
<span class="t nav" style="left:133.70px;top:8.00px;letter-spacing:-0.145px;">Création</span>
<span class="t nav" style="left:184.70px;top:8.00px;letter-spacing:0.207px;">Importation</span>
<span class="t nav" style="left:250.80px;top:8.00px;letter-spacing:-0.078px;">Modification</span>
<span class="t navb" style="left:317.50px;top:8.00px;letter-spacing:-0.199px;">Etats</span>
<span class="t nav" style="left:353.50px;top:8.00px;letter-spacing:-0.293px;">Procédures</span>
<span class="t nav" style="left:416.00px;top:8.00px;letter-spacing:-0.070px;">Sécurité</span>
<span class="t nav" style="left:465.50px;top:8.00px;letter-spacing:0.021px;">Exportation</span>
<span class="t nav" style="left:19.30px;top:36.00px;letter-spacing:-0.156px;">Liaisons Mandats-SDD</span>
<span class="t nav" style="left:132.30px;top:36.00px;">Historique des mandats</span>
<span class="t nav" style="left:251.00px;top:36.00px;letter-spacing:-0.036px;">Journal des mandats</span>
<span class="t navb" style="left:357.00px;top:36.00px;letter-spacing:0.051px;text-decoration:underline;text-decoration-color:rgba(36,88,200,0.5);">Etat sur les débiteurs</span>
<span class="t para" style="left:19.50px;top:66.60px;letter-spacing:0.296px;">A partir de cet état, vous pouvez avoir une vision de vos relations avec vos débiteurs.</span>
<span class="t lbl" style="left:24.30px;top:94.80px;letter-spacing:0.277px;">Recherche rapide</span>
<span class="t lbl" style="left:25.90px;top:118.20px;letter-spacing:0.498px;">ICS :</span>
<span class="t lbl" style="left:25.90px;top:135.80px;letter-spacing:0.377px;">Pays débiteur :</span>
<span class="t lbl" style="left:25.90px;top:151.80px;letter-spacing:0.391px;">Pays banque débiteur :</span>
<span class="t lbl" style="left:25.90px;top:168.80px;letter-spacing:0.355px;">Schéma :</span>
<span class="t lbl" style="left:313.90px;top:118.00px;letter-spacing:0.357px;">Créancier :</span>
<span class="t lbl" style="left:313.90px;top:135.80px;letter-spacing:0.445px;">BIC banque débiteur :</span>
<span class="t lbl" style="left:313.90px;top:151.50px;letter-spacing:0.609px;">Statut :</span>
<span class="t tab" style="left:28.70px;top:209.80px;letter-spacing:0.306px;">Liste des débiteurs - Page 1/1 - 5 élément(s) trouvé(s)</span>
<span class="t n20" style="left:31.60px;top:232.40px;letter-spacing:0.163px;">20</span>
<span class="t res" style="left:71.70px;top:232.50px;letter-spacing:0.474px;">résultats par page</span>
<span class="t pg" style="left:427.60px;top:231.20px;">1</span>
<span class="t th" style="left:22.40px;top:256.80px;transform:scaleX(0.889);transform-origin:0 0;">Débiteur</span>
<span class="t th" style="left:270.60px;top:252.90px;transform:scaleX(0.922);transform-origin:0 0;">BIC banque</span>
<span class="t th" style="left:270.60px;top:260.80px;transform:scaleX(0.898);transform-origin:0 0;">débiteur</span>
<span class="t th" style="left:328.00px;top:256.80px;transform:scaleX(0.896);transform-origin:0 0;">RUM</span>
<span class="t th" style="left:507.80px;top:252.90px;transform:scaleX(0.837);transform-origin:0 0;">Schéma</span>
<span class="t th" style="left:507.80px;top:260.80px;transform:scaleX(0.854);transform-origin:0 0;">SDD</span>
<span class="t th" style="left:543.00px;top:256.80px;transform:scaleX(0.899);transform-origin:0 0;">Créancier</span>
<span class="t th" style="left:632.00px;top:256.80px;transform:scaleX(0.846);transform-origin:0 0;">Statut</span>
<span class="t th" style="left:731.10px;top:256.80px;transform:scaleX(0.899);transform-origin:0 0;">Origine</span>
<span class="t th" style="left:764.70px;top:256.80px;transform:scaleX(0.842);transform-origin:0 0;">Action</span>
<span class="t td" style="left:21.70px;top:271.80px;letter-spacing:-0.014px;">aaa - aaa</span>
<span class="t tdl" style="left:271.00px;top:271.80px;letter-spacing:0.286px;">xxxxxxxx</span>
<span class="t lnk" style="left:328.30px;top:271.80px;letter-spacing:0.530px;text-decoration:underline;">00CP1305FI01114</span>
<span class="t td" style="left:507.00px;top:271.80px;letter-spacing:-0.408px;">CORE</span>
<span class="t td" style="left:543.00px;top:271.80px;letter-spacing:0.015px;">FIO  - Raison sociale</span>
<span class="t td" style="left:543.00px;top:280.40px;letter-spacing:-0.672px;">FIO</span>
<span class="t td" style="left:632.00px;top:271.80px;letter-spacing:0.019px;">En attente d&#x27;envoi au</span>
<span class="t td" style="left:632.00px;top:280.40px;letter-spacing:-0.008px;">débiteur pour signature</span>
<span class="t td" style="left:731.10px;top:271.80px;letter-spacing:-0.272px;">Nouveau</span>
<span class="t td" style="left:21.70px;top:291.80px;letter-spacing:0.234px;">BENEFICIAIRE001 - BENEFICIAIRE001__</span>
<span class="t td" style="left:271.00px;top:291.80px;letter-spacing:-0.014px;">BICCODEX</span>
<span class="t lnk" style="left:328.30px;top:291.80px;letter-spacing:0.530px;text-decoration:underline;">00CP1305FI01113</span>
<span class="t td" style="left:507.00px;top:291.80px;letter-spacing:-0.408px;">CORE</span>
<span class="t td" style="left:543.00px;top:291.80px;letter-spacing:0.015px;">FIO  - Raison sociale</span>
<span class="t td" style="left:543.00px;top:300.40px;letter-spacing:-0.672px;">FIO</span>
<span class="t td" style="left:632.00px;top:291.80px;letter-spacing:0.019px;">En attente d&#x27;envoi au</span>
<span class="t td" style="left:632.00px;top:300.40px;letter-spacing:-0.008px;">débiteur pour signature</span>
<span class="t td" style="left:731.10px;top:291.80px;letter-spacing:-0.272px;">Nouveau</span>
<span class="t td" style="left:24.80px;top:311.80px;letter-spacing:0.300px;">-</span>
<span class="t lnk" style="left:328.30px;top:311.80px;letter-spacing:1.909px;text-decoration:underline;">   </span>
<span class="t td" style="left:507.00px;top:311.80px;letter-spacing:-0.408px;">CORE</span>
<span class="t td" style="left:543.00px;top:311.80px;letter-spacing:0.045px;">HOLDING  - Raison</span>
<span class="t td" style="left:543.00px;top:320.40px;letter-spacing:0.123px;">sociale HOLDING</span>
<span class="t td" style="left:632.00px;top:311.80px;letter-spacing:0.164px;">Incomplet</span>
<span class="t td" style="left:731.10px;top:311.80px;letter-spacing:-0.272px;">Nouveau</span>
<span class="t td" style="left:24.80px;top:331.80px;letter-spacing:0.300px;">-</span>
<span class="t lnk" style="left:328.30px;top:331.80px;letter-spacing:0.541px;text-decoration:underline;">00CR1305FI01111</span>
<span class="t td" style="left:507.00px;top:331.80px;letter-spacing:-0.408px;">CORE</span>
<span class="t td" style="left:543.00px;top:331.80px;letter-spacing:0.015px;">FIO  - Raison sociale</span>
<span class="t td" style="left:543.00px;top:340.40px;letter-spacing:-0.672px;">FIO</span>
<span class="t td" style="left:632.00px;top:331.80px;letter-spacing:0.164px;">Incomplet</span>
<span class="t td" style="left:731.10px;top:331.80px;letter-spacing:-0.272px;">Nouveau</span>
<span class="t td" style="left:24.80px;top:351.80px;letter-spacing:0.300px;">-</span>
<span class="t lnk" style="left:328.30px;top:351.80px;letter-spacing:0.530px;text-decoration:underline;">00CP1305FI01110</span>
<span class="t td" style="left:507.00px;top:351.80px;letter-spacing:-0.408px;">CORE</span>
<span class="t td" style="left:543.00px;top:351.80px;letter-spacing:0.015px;">FIO  - Raison sociale</span>
<span class="t td" style="left:543.00px;top:360.40px;letter-spacing:-0.672px;">FIO</span>
<span class="t td" style="left:632.00px;top:351.80px;letter-spacing:0.164px;">Incomplet</span>
<span class="t td" style="left:731.10px;top:351.80px;letter-spacing:-0.272px;">Nouveau</span>
<span class="t td" style="left:21.70px;top:371.80px;letter-spacing:0.228px;">TIERS_HOLDING_MANDAT_TUNISIE_001 -</span>
<span class="t td" style="left:24.20px;top:380.40px;letter-spacing:0.174px;">TIERS_HOLDING_MANDAT_TUNISIE_001</span>
<span class="t td" style="left:271.00px;top:371.80px;letter-spacing:0.112px;">BEITTNTT</span>
<span class="t lnk" style="left:328.30px;top:371.80px;letter-spacing:0.487px;text-decoration:underline;">00CP1305FI01109</span>
<span class="t td" style="left:507.00px;top:371.80px;letter-spacing:-0.408px;">CORE</span>
<span class="t td" style="left:543.00px;top:371.80px;letter-spacing:0.015px;">FIO  - Raison sociale</span>
<span class="t td" style="left:543.00px;top:380.40px;letter-spacing:-0.672px;">FIO</span>
<span class="t td" style="left:632.00px;top:371.80px;letter-spacing:0.019px;">En attente d&#x27;envoi au</span>
<span class="t td" style="left:632.00px;top:380.40px;letter-spacing:-0.008px;">débiteur pour signature</span>
<span class="t td" style="left:731.10px;top:371.80px;letter-spacing:-0.272px;">Nouveau</span>
<span class="t td" style="left:24.80px;top:391.80px;letter-spacing:0.300px;">-</span>
<span class="t lnk" style="left:328.30px;top:391.80px;letter-spacing:1.909px;text-decoration:underline;">   </span>
<span class="t td" style="left:507.00px;top:391.80px;letter-spacing:-0.408px;">CORE</span>
<span class="t td" style="left:543.00px;top:391.80px;letter-spacing:0.015px;">FIO  - Raison sociale</span>
<span class="t td" style="left:543.00px;top:400.40px;letter-spacing:-0.672px;">FIO</span>
<span class="t td" style="left:632.00px;top:391.80px;letter-spacing:0.164px;">Incomplet</span>
<span class="t td" style="left:731.10px;top:391.80px;letter-spacing:-0.272px;">Nouveau</span>
<span class="t td" style="left:21.70px;top:411.80px;letter-spacing:0.355px;">9865467878 - name</span>
<span class="t td" style="left:271.00px;top:411.80px;letter-spacing:-0.446px;">BNABFRPP</span>
<span class="t lnk" style="left:328.30px;top:411.80px;letter-spacing:0.335px;text-decoration:underline;">00CP1304HOLDING1106</span>
<span class="t td" style="left:507.00px;top:411.80px;letter-spacing:-0.408px;">CORE</span>
<span class="t td" style="left:543.00px;top:411.80px;letter-spacing:0.045px;">HOLDING  - Raison</span>
<span class="t td" style="left:543.00px;top:420.40px;letter-spacing:0.123px;">sociale HOLDING</span>
<span class="t td" style="left:632.00px;top:411.80px;letter-spacing:0.019px;">En attente d&#x27;envoi au</span>
<span class="t td" style="left:632.00px;top:420.40px;letter-spacing:-0.008px;">débiteur pour signature</span>
<span class="t td" style="left:731.10px;top:411.80px;letter-spacing:-0.272px;">Nouveau</span>
<span class="t td" style="left:21.70px;top:430.80px;letter-spacing:0.355px;">4545455455 - name</span>
<span class="t td" style="left:271.00px;top:430.80px;letter-spacing:-0.446px;">BNABFRPP</span>
<span class="t lnk" style="left:328.30px;top:430.80px;letter-spacing:0.456px;text-decoration:underline;">00CR1304FI01105</span>
<span class="t td" style="left:507.00px;top:430.80px;letter-spacing:-0.408px;">CORE</span>
<span class="t td" style="left:543.00px;top:430.80px;letter-spacing:0.015px;">FIO  - Raison sociale</span>
<span class="t td" style="left:543.00px;top:439.40px;letter-spacing:-0.672px;">FIO</span>
<span class="t td" style="left:632.00px;top:430.80px;letter-spacing:0.019px;">En attente d&#x27;envoi au</span>
<span class="t td" style="left:632.00px;top:439.40px;letter-spacing:-0.008px;">débiteur pour signature</span>
<span class="t td" style="left:731.10px;top:430.80px;letter-spacing:-0.272px;">Nouveau</span>
<span class="t td" style="left:21.70px;top:450.80px;letter-spacing:0.175px;">BENEFICIAIRE1 - BENEFICIAIRE1__</span>
<span class="t td" style="left:271.00px;top:450.80px;letter-spacing:-0.014px;">BICCODEX</span>
<span class="t lnk" style="left:328.30px;top:450.80px;letter-spacing:0.487px;text-decoration:underline;">00CP1304FI01104</span>
<span class="t td" style="left:507.00px;top:450.80px;letter-spacing:-0.408px;">CORE</span>
<span class="t td" style="left:543.00px;top:450.80px;letter-spacing:0.015px;">FIO  - Raison sociale</span>
<span class="t td" style="left:543.00px;top:459.40px;letter-spacing:-0.672px;">FIO</span>
<span class="t td" style="left:632.00px;top:450.80px;letter-spacing:0.019px;">En attente d&#x27;envoi au</span>
<span class="t td" style="left:632.00px;top:459.40px;letter-spacing:-0.008px;">débiteur pour signature</span>
<span class="t td" style="left:731.10px;top:450.80px;letter-spacing:-0.272px;">Nouveau</span>
<span class="t td" style="left:21.70px;top:471.80px;letter-spacing:0.037px;">MT1 - DUPONT</span>
<span class="t td" style="left:271.00px;top:471.80px;letter-spacing:-0.446px;">BNPPFRPP</span>
<span class="t lnk" style="left:328.30px;top:471.80px;letter-spacing:0.064px;text-decoration:underline;">00CR1303SAGE7</span>
<span class="t td" style="left:507.00px;top:471.80px;letter-spacing:-0.408px;">CORE</span>
<span class="t td" style="left:543.00px;top:471.80px;letter-spacing:0.015px;">FIO  - Raison sociale</span>
<span class="t td" style="left:543.00px;top:480.40px;letter-spacing:-0.672px;">FIO</span>
<span class="t td" style="left:632.00px;top:471.80px;letter-spacing:0.234px;">Actif</span>
<span class="t td" style="left:731.10px;top:471.80px;letter-spacing:-0.154px;">Migré</span>
<span class="t td" style="left:21.70px;top:490.80px;letter-spacing:0.206px;">BENEFICIAIRE002 - BENEFICIAIRE002__3__</span>
<span class="t td" style="left:271.00px;top:490.80px;letter-spacing:-0.014px;">BICCODEX</span>
<span class="t lnk" style="left:328.30px;top:490.80px;letter-spacing:0.487px;text-decoration:underline;">00CP1304FI01102</span>
<span class="t td" style="left:507.00px;top:490.80px;letter-spacing:-0.408px;">CORE</span>
<span class="t td" style="left:543.00px;top:490.80px;letter-spacing:0.015px;">FIO  - Raison sociale</span>
<span class="t td" style="left:543.00px;top:499.40px;letter-spacing:-0.672px;">FIO</span>
<span class="t td" style="left:632.00px;top:490.80px;letter-spacing:-0.016px;">Signé par le débiteur</span>
<span class="t td" style="left:731.10px;top:490.80px;letter-spacing:-0.272px;">Nouveau</span>
<span class="t td" style="left:21.70px;top:510.80px;letter-spacing:0.096px;">TIERS_MANDATHEQUE_HOLDING_00011 - Blandine ROBOAM</span>
<span class="t td" style="left:271.00px;top:510.80px;letter-spacing:-0.636px;">SOGEFRPP</span>
<span class="t lnk" style="left:328.30px;top:510.80px;letter-spacing:0.454px;text-decoration:underline;">00BP1304FI01101</span>
<span class="t td" style="left:507.00px;top:510.80px;letter-spacing:-0.062px;">B2B</span>
<span class="t td" style="left:543.00px;top:510.80px;letter-spacing:0.015px;">FIO  - Raison sociale</span>
<span class="t td" style="left:543.00px;top:519.40px;letter-spacing:-0.672px;">FIO</span>
<span class="t td" style="left:632.00px;top:510.80px;letter-spacing:0.234px;">Actif</span>
<span class="t td" style="left:731.10px;top:510.80px;letter-spacing:-0.272px;">Nouveau</span>
<span class="t td" style="left:21.70px;top:530.80px;letter-spacing:0.117px;">TIERS_MANDATHEQUE_HOLDING_00001 - Hervé Pires</span>
<span class="t td" style="left:271.00px;top:530.80px;letter-spacing:-0.636px;">SOGEFRPP</span>
<span class="t lnk" style="left:328.30px;top:530.80px;letter-spacing:0.105px;text-decoration:underline;">No.Iban.In.File.Import.For.Debtor</span>
<span class="t td" style="left:507.00px;top:530.80px;letter-spacing:-0.408px;">CORE</span>
<span class="t td" style="left:543.00px;top:530.80px;letter-spacing:0.015px;">FIO  - Raison sociale</span>
<span class="t td" style="left:543.00px;top:539.40px;letter-spacing:-0.672px;">FIO</span>
<span class="t td" style="left:632.00px;top:530.80px;letter-spacing:-0.339px;">Clos</span>
<span class="t td" style="left:731.10px;top:530.80px;letter-spacing:-0.154px;">Migré</span>
<span class="t td" style="left:21.70px;top:550.80px;letter-spacing:0.228px;">TIERS_HOLDING_MANDAT_TUNISIE_001 -</span>
<span class="t td" style="left:24.20px;top:559.40px;letter-spacing:0.174px;">TIERS_HOLDING_MANDAT_TUNISIE_001</span>
<span class="t td" style="left:271.00px;top:550.80px;letter-spacing:0.112px;">BEITTNTT</span>
<span class="t lnk" style="left:328.30px;top:550.80px;letter-spacing:0.334px;text-decoration:underline;">TN000001</span>
<span class="t td" style="left:507.00px;top:550.80px;letter-spacing:-0.408px;">CORE</span>
<span class="t td" style="left:543.00px;top:550.80px;letter-spacing:0.015px;">FIO  - Raison sociale</span>
<span class="t td" style="left:543.00px;top:559.40px;letter-spacing:-0.672px;">FIO</span>
<span class="t td" style="left:632.00px;top:550.80px;letter-spacing:-0.339px;">Clos</span>
<span class="t td" style="left:731.10px;top:550.80px;letter-spacing:-0.272px;">Nouveau</span>
<span class="t td" style="left:21.70px;top:570.80px;letter-spacing:0.114px;">TIERS_MANDATHEQUE_HOLDING_00004 - Patrick STEPHAN</span>
<span class="t td" style="left:271.00px;top:570.80px;letter-spacing:-0.636px;">SOGEFRPP</span>
<span class="t lnk" style="left:328.30px;top:570.80px;letter-spacing:0.203px;text-decoration:underline;">00CR131Num.Iden203</span>
<span class="t td" style="left:507.00px;top:570.80px;letter-spacing:-0.408px;">CORE</span>
<span class="t td" style="left:543.00px;top:570.80px;letter-spacing:0.015px;">FIO  - Raison sociale</span>
<span class="t td" style="left:543.00px;top:579.40px;letter-spacing:-0.672px;">FIO</span>
<span class="t td" style="left:632.00px;top:570.80px;letter-spacing:0.186px;">Non Actif</span>
<span class="t td" style="left:731.10px;top:570.80px;letter-spacing:-0.272px;">Nouveau</span>
<span class="t td" style="left:21.70px;top:590.80px;letter-spacing:0.114px;">TIERS_MANDATHEQUE_HOLDING_00004 - Patrick STEPHAN</span>
<span class="t td" style="left:271.00px;top:590.80px;letter-spacing:-0.636px;">SOGEFRPP</span>
<span class="t lnk" style="left:328.30px;top:590.80px;letter-spacing:0.203px;text-decoration:underline;">00CR131Num.Iden202</span>
<span class="t td" style="left:507.00px;top:590.80px;letter-spacing:-0.408px;">CORE</span>
<span class="t td" style="left:543.00px;top:590.80px;letter-spacing:0.015px;">FIO  - Raison sociale</span>
<span class="t td" style="left:543.00px;top:599.40px;letter-spacing:-0.672px;">FIO</span>
<span class="t td" style="left:632.00px;top:590.80px;letter-spacing:0.186px;">Non Actif</span>
<span class="t td" style="left:731.10px;top:590.80px;letter-spacing:-0.272px;">Nouveau</span>
</body></html>
